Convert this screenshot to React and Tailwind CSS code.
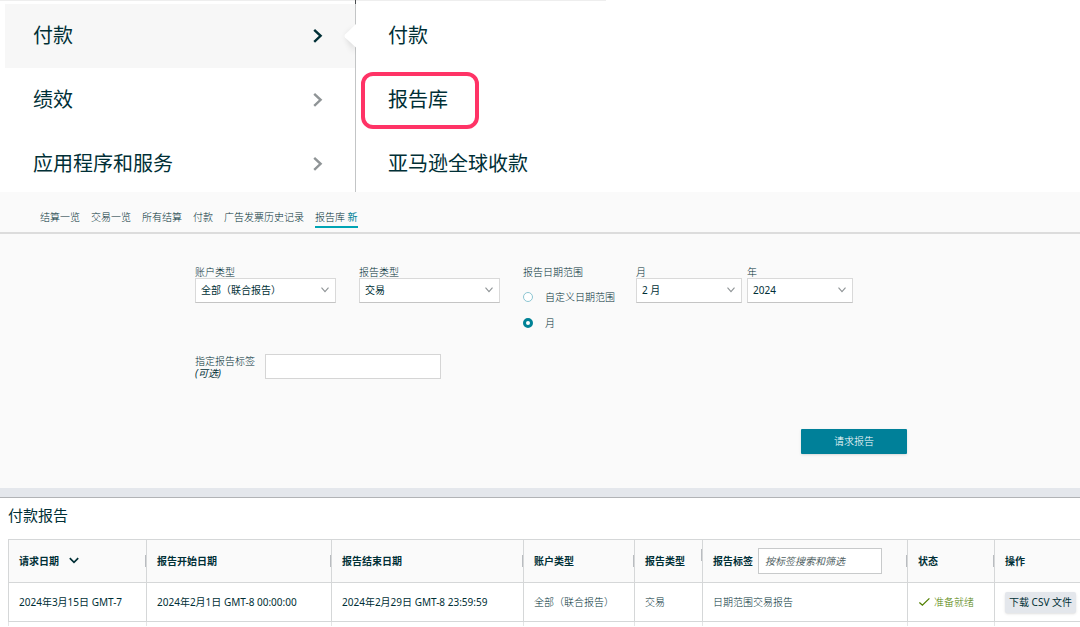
import React from "react";

const mainMenu = [
  { label: "付款", active: true },
  { label: "绩效" },
  { label: "应用程序和服务" },
];

const subMenu = [
  { label: "付款" },
  { label: "报告库", highlighted: true },
  { label: "亚马逊全球收款" },
];

const tabs = ["结算一览", "交易一览", "所有结算", "付款", "广告发票历史记录"];

function Chevron({ className }) {
  return (
    <svg viewBox="0 0 10 16" className={className} fill="none" stroke="currentColor" strokeWidth="2.4" aria-hidden="true">
      <path d="M1.2 1.8 L7.6 7.8 L1.2 13.8" />
    </svg>
  );
}

function SelectField({ id, label, value, className }) {
  return (
    <div className={className}>
      <label htmlFor={id} className="block h-3 leading-3">{label}</label>
      <div className="relative font-normal">
        <select
          id={id}
          defaultValue={value}
          className="block h-[25px] w-full appearance-none border border-[#d9d9d9] border-b-[#c4c4c4] bg-white pl-[5px] pr-5 text-[#002f36]"
        >
          <option>{value}</option>
        </select>
        <svg viewBox="0 0 8 6" className="pointer-events-none absolute right-[7px] top-[9px] h-1.5 w-2" fill="none" stroke="#8f9496" strokeWidth="1.1" aria-hidden="true">
          <path d="M0.5 0.7 L4 4.7 L7.5 0.7" />
        </svg>
      </div>
    </div>
  );
}

function RadioField({ id, label, checked }) {
  return (
    <div className="flex items-center gap-3">
      <input
        id={id}
        type="radio"
        name="range"
        defaultChecked={checked}
        className="size-2.5 appearance-none rounded-full border border-[#8cc5d2] bg-white checked:border-[3px] checked:border-[#008296]"
      />
      <label htmlFor={id} className="leading-3">{label}</label>
    </div>
  );
}

function HeaderCell({ children, last, raised }) {
  return (
    <th className="h-[43px] border border-[#d5d7d8] bg-[#fafafa] p-0 text-left font-bold">
      <div className="flex items-center justify-between">
        <div className="flex items-center pl-2.5 whitespace-nowrap">{children}</div>
        {!last && <span className={raised ? "mb-3 h-3 w-px bg-[#b9bcc0]" : "h-3 w-px bg-[#b9bcc0]"} />}
      </div>
    </th>
  );
}

function Cell({ children, strong }) {
  return (
    <td
      className={
        strong
          ? "h-[39px] whitespace-nowrap border border-[#d5d7d8] p-0 pl-2.5 font-normal"
          : "h-[39px] whitespace-nowrap border border-[#d5d7d8] p-0 pl-2.5"
      }
    >
      {children}
    </td>
  );
}

export default function App() {
  return (
    <div className="min-h-screen overflow-x-hidden bg-white font-['Noto_Sans','Noto_Sans_CJK_SC',sans-serif] text-[10px] text-[#002f36]">
      <header className="relative flex text-xl">
        <span className="absolute left-0 top-0 h-px w-[606px] bg-[#eeeeee]" />
        <span className="absolute left-[355px] top-0 h-1 w-px bg-[#4a4d4f]" />
        <nav className="w-[355px] shrink-0 pl-[5px] pt-1">
          {mainMenu.map((item) => (
            <a
              key={item.label}
              href="#"
              className={
                item.active
                  ? "relative flex h-16 items-center justify-between bg-[#f7f7f7] pl-7 pr-8"
                  : "flex h-16 items-center justify-between pl-7 pr-8 last:h-15 last:pt-1"
              }
            >
              <span>{item.label}</span>
              <Chevron className={item.active ? "h-4 w-2.5" : "h-4 w-2.5 text-[#8f9496]"} />
              {item.active && (
                <svg viewBox="0 0 32 64" className="absolute -right-px top-0 h-16 w-8" aria-hidden="true">
                  <defs>
                    <filter id="soft" x="-50%" y="-50%" width="200%" height="200%">
                      <feGaussianBlur stdDeviation="3" />
                    </filter>
                  </defs>
                  <path d="M31 24 L22 32 L31 49 Z" fill="#000000" opacity="0.14" filter="url(#soft)" />
                  <path d="M32 20 L21 30.5 Q19.8 32 21 33.5 L32 43.5 Z" fill="#ffffff" />
                </svg>
              )}
            </a>
          ))}
        </nav>
        <nav className="grow border-l border-[#c3c5c6] pt-1">
          {subMenu.map((item) => (
            <a key={item.label} href="#" className="relative flex h-16 items-center pl-8 last:h-15 last:pt-1">
              <span>{item.label}</span>
              {item.highlighted && (
                <span className="absolute left-[5px] top-1 h-[57px] w-[118px] rounded-xl border-4 border-[#ff3366]" />
              )}
            </a>
          ))}
        </nav>
      </header>

      <main className="font-light">
        <nav className="flex items-end gap-[11px] border-b-2 border-[#dcdcdc] bg-[#fafafa] pb-1 pl-10 pt-[18px]">
          {tabs.map((tab) => (
            <a key={tab} href="#" className="border-b-2 border-transparent pb-0.5 leading-[14px]">{tab}</a>
          ))}
          <a href="#" className="border-b-2 border-[#00a4b4] pb-0.5 leading-[14px]">
            报告库 <span className="font-normal text-[#008296]">新</span>
          </a>
        </nav>

        <form className="border-b border-[#b1b3b6] bg-[#fafafa]" onSubmit={(e) => e.preventDefault()}>
          <div className="flex pl-[195px] pt-8">
            <SelectField id="account" label="账户类型" value="全部（联合报告）" className="mr-[23px] w-[141px]" />
            <SelectField id="type" label="报告类型" value="交易" className="mr-[23px] w-[141px]" />
            <fieldset className="w-[113px]">
              <legend className="h-3 leading-3">报告日期范围</legend>
              <div className="flex flex-col gap-3.5 pt-[13px]">
                <RadioField id="custom" label="自定义日期范围" />
                <RadioField id="monthly" label="月" checked />
              </div>
            </fieldset>
            <SelectField id="month" label="月" value="2 月" className="mr-[5px] w-[106px]" />
            <SelectField id="year" label="年" value="2024" className="w-[106px]" />
          </div>
          <div className="flex items-center gap-2.5 pl-[195px] pt-[25px]">
            <label htmlFor="tag" className="leading-3">
              指定报告标签
              <br />
              <em className="font-normal">(可选)</em>
            </label>
            <input id="tag" type="text" className="h-[25px] w-44 border border-[#d5d5d5] bg-white px-1.5" />
          </div>
          <div className="pb-[34px] pl-[801px] pt-[50px]">
            <button type="submit" className="block h-[25px] w-[106px] rounded-[1px] bg-[#008099] text-white shadow-sm">
              请求报告
            </button>
          </div>
          <div className="h-[9px] bg-[#e4e7ec]" />
        </form>

        <h2 className="pb-3.5 pl-2 pt-[7px] text-[15px] font-normal leading-5">付款报告</h2>

        <table className="ml-2 w-[calc(100%-6px)] table-fixed border-collapse">
          <colgroup>
            <col className="w-[138px]" />
            <col className="w-[185px]" />
            <col className="w-[192px]" />
            <col className="w-[111px]" />
            <col className="w-[68px]" />
            <col className="w-[205px]" />
            <col className="w-[87px]" />
            <col />
          </colgroup>
          <thead>
            <tr>
              <HeaderCell>
                请求日期
                <svg viewBox="0 0 10 8" className="ml-2.5 h-2 w-2.5" fill="none" stroke="currentColor" strokeWidth="1.7" aria-hidden="true">
                  <path d="M0.8 1.2 L5 5.4 L9.2 1.2" />
                </svg>
              </HeaderCell>
              <HeaderCell>报告开始日期</HeaderCell>
              <HeaderCell>报告结束日期</HeaderCell>
              <HeaderCell>账户类型</HeaderCell>
              <HeaderCell raised>报告类型</HeaderCell>
              <HeaderCell>
                <label htmlFor="filter">报告标签</label>
                <input
                  id="filter"
                  type="text"
                  placeholder="按标签搜索和筛选"
                  className="ml-[5px] h-[26px] w-31 border border-[#c8cacb] bg-white px-1.5 font-normal placeholder:italic placeholder:text-[#4f5f63]"
                />
              </HeaderCell>
              <HeaderCell>状态</HeaderCell>
              <HeaderCell last>操作</HeaderCell>
            </tr>
          </thead>
          <tbody>
            <tr>
              <Cell strong>2024年3月15日 GMT-7</Cell>
              <Cell strong>2024年2月1日 GMT-8 00:00:00</Cell>
              <Cell strong>2024年2月29日 GMT-8 23:59:59</Cell>
              <Cell>全部（联合报告）</Cell>
              <Cell>交易</Cell>
              <Cell>日期范围交易报告</Cell>
              <Cell>
                <span className="flex items-center gap-1 text-[#507f00]">
                  <svg viewBox="0 0 12 10" className="h-2.5 w-3" fill="none" stroke="currentColor" strokeWidth="1.3" aria-hidden="true">
                    <path d="M1.4 5.4 L4.4 8.2 L11.4 1.4" />
                  </svg>
                  准备就绪
                </span>
              </Cell>
              <Cell>
                <button type="button" className="block h-[21px] w-[71px] rounded-xs bg-[#e4e7ec] font-normal shadow-sm">下载 CSV 文件</button>
              </Cell>
            </tr>
            <tr aria-hidden="true">
              <td className="h-1 border-x border-[#e4e5e6] p-0" />
              <td className="border-x border-[#e4e5e6] p-0" />
              <td className="border-x border-[#e4e5e6] p-0" />
              <td className="border-x border-[#e4e5e6] p-0" />
              <td className="border-x border-[#e4e5e6] p-0" />
              <td className="border-x border-[#e4e5e6] p-0" />
              <td className="border-x border-[#e4e5e6] p-0" />
              <td className="border-x border-[#e4e5e6] p-0" />
            </tr>
          </tbody>
        </table>
      </main>
    </div>
  );
}
